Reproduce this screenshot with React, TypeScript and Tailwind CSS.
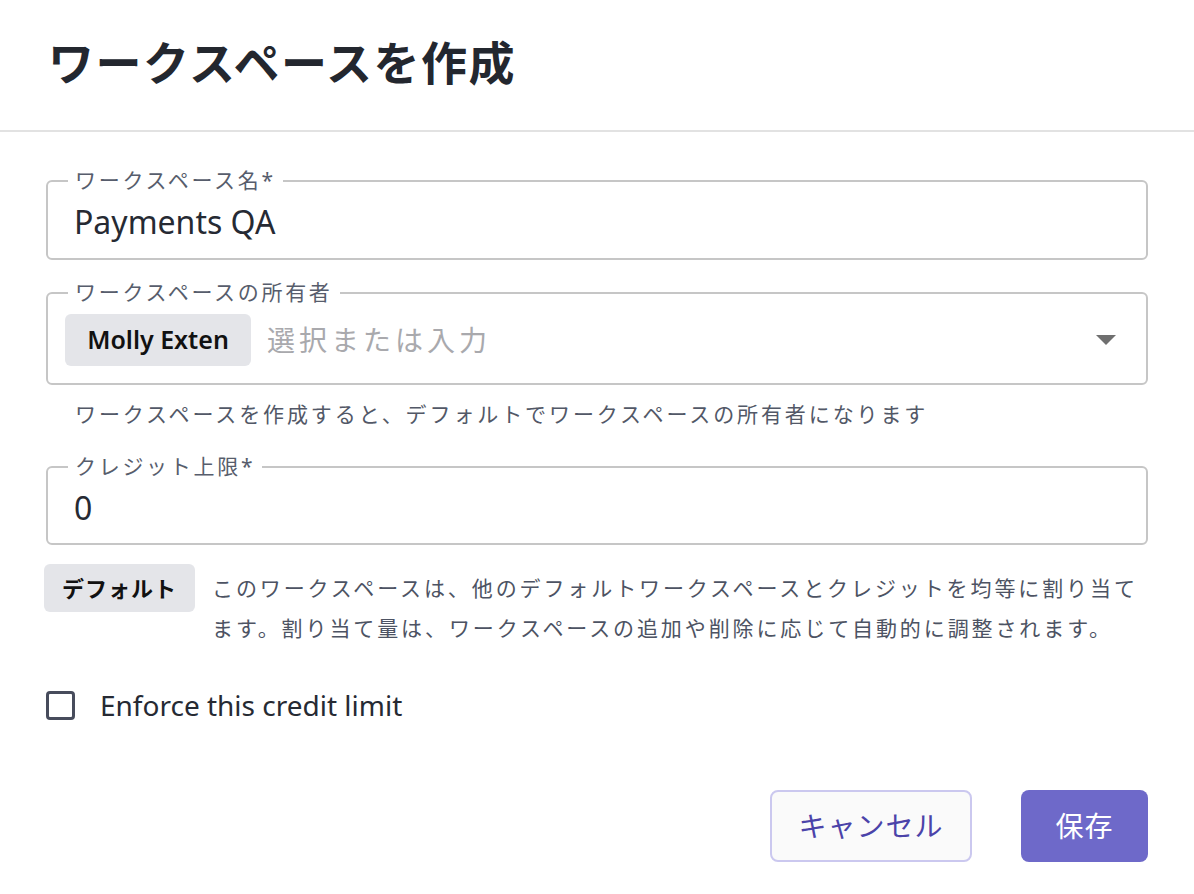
import React from "react";

const font = { fontFamily: '"Noto Sans", "Noto Sans CJK JP", sans-serif' };

function Field({ label, children, h }: { label: string; children: React.ReactNode; h: string }) {
  return (
    <div className={`relative ${h} rounded-[6px] border-2 border-[#c6c6c6] flex items-center`}>
      <span className="absolute left-[20px] top-[-16px] bg-white px-[7px] text-[21px] leading-[28px] text-[#575d6c] tracking-[2.7px]">
        {label}
      </span>
      {children}
    </div>
  );
}

export default function App() {
  return (
    <div className="w-[1194px] h-[894px] bg-white text-[#262a33] flex flex-col" style={font}>
      <div className="h-[132px] flex items-center pl-[48px] border-b-2 border-[#e2e2e2]">
        <h1 className="text-[46px] font-bold text-[#23272f] leading-none pb-[6px] tracking-[1.5px]">ワークスペースを作成</h1>
      </div>
      <div className="px-[46px] pt-[48px] flex flex-col">
        <Field label="ワークスペース名*" h="h-[80px]">
          <span className="pl-[26px] pt-[3px] text-[32px] text-[#262a33]">Payments QA</span>
        </Field>
        <div className="h-[32px]" />
        <Field label="ワークスペースの所有者" h="h-[93px]">
          <div className="flex items-center pl-[17px] pr-[30px] w-full pt-[2px]">
            <span className="h-[52px] w-[186px] rounded-[6px] bg-[#e4e5e9] flex items-center justify-center text-[25px] font-semibold text-[#111]">
              Molly Exten
            </span>
            <span className="ml-[16px] text-[28px] text-[#a9a9ad] tracking-[4px]">選択または入力</span>
            <svg className="ml-auto" width="20" height="10" viewBox="0 0 20 10">
              <path d="M0 0 L20 0 L10 10 Z" fill="#6f6f6f" />
            </svg>
          </div>
        </Field>
        <p className="pl-[29px] mt-[15px] text-[21px] leading-[28px] text-[#525867] tracking-[2.9px]">
          ワークスペースを作成すると、デフォルトでワークスペースの所有者になります
        </p>
        <div className="h-[38px]" />
        <Field label="クレジット上限*" h="h-[79px]">
          <span className="pl-[26px] pt-[4px] text-[32px] text-[#262a33]">0</span>
        </Field>
        <div className="flex items-start mt-[19px] ml-[-2px]">
          <span className="shrink-0 h-[48px] w-[151px] rounded-[6px] bg-[#e4e5e9] flex items-center justify-center text-[22px] font-bold text-[#111] tracking-[1px]">
            デフォルト
          </span>
          <p className="ml-[17px] mt-[4px] text-[21px] leading-[40px] text-[#4d5363] tracking-[2.9px] whitespace-nowrap">
            このワークスペースは、他のデフォルトワークスペースとクレジットを均等に割り当て
            <br />
            ます。割り当て量は、ワークスペースの追加や削除に応じて自動的に調整されます。
          </p>
        </div>
        <label className="flex items-center mt-[36px]">
          <span className="h-[29px] w-[29px] rounded-[4px] border-[3px] border-[#474c5c] bg-white" />
          <span className="ml-[25px] text-[28px] text-[#262a33]">Enforce this credit limit</span>
        </label>
        <div className="flex justify-end gap-[49px] mt-[64px]">
          <button className="h-[72px] w-[202px] rounded-[8px] border-2 border-[#cbc8ef] bg-[#fafafa] text-[28px] text-[#4b43a9] tracking-[1px]">
            キャンセル
          </button>
          <button className="h-[72px] w-[127px] rounded-[8px] bg-[#6e69c9] text-[28px] text-white tracking-[1px]">
            保存
          </button>
        </div>
      </div>
    </div>
  );
}
